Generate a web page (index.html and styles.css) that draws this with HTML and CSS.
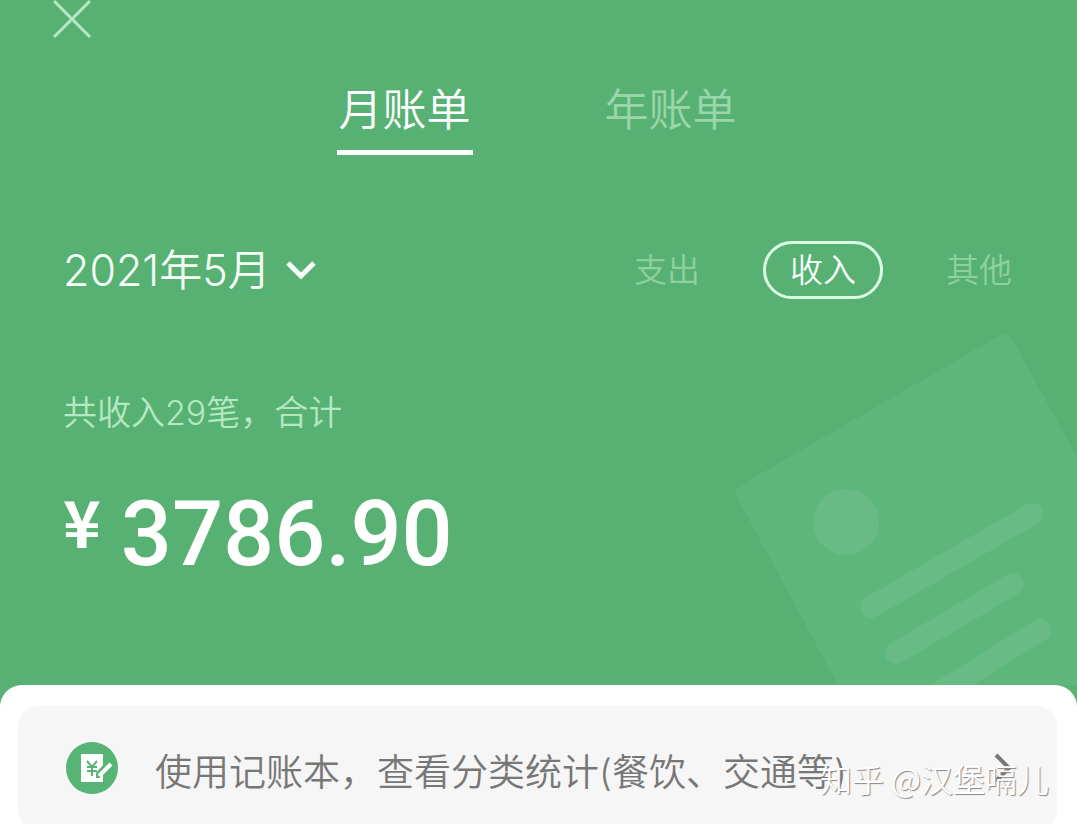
FILE: index.html
```html
<!DOCTYPE html>
<html lang="zh-CN">
    <head>
        <meta charset="UTF-8">
        <meta name="viewport" content="width=device-width, initial-scale=1.0">
        <title>月账单</title>
        <link rel="stylesheet" href="styles.css">
    </head>
    <body>
        <main class="bill">
            <section class="hero">
                <svg class="hero-art" viewBox="0 0 357 365" aria-hidden="true">
                    <path class="art-paper" d="M18 167 L277 17 Q287 11 293 21 L357 137 V365 H118 L16 175 Q13 170 18 167 Z"/>
                    <circle class="art-dot" cx="126" cy="202" r="33"/>
                    <path class="art-line" d="M151 287 L312 194 M176 333 L293 264 M222 371 L320 310"/>
                </svg>

                <button class="close" type="button" aria-label="关闭">
                    <svg viewBox="0 0 38 38" width="38" height="38"><path d="M1 1 L37 37 M37 1 L1 37"/></svg>
                </button>

                <nav class="tabs">
                    <a class="tab active" href="#month">月账单</a>
                    <a class="tab" href="#year">年账单</a>
                </nav>

                <div class="toolbar">
                    <button class="month" type="button">
                        <span>2021年5月</span>
                        <svg viewBox="0 0 32 20" width="32" height="20" aria-hidden="true"><path d="M3 3 L16 16 L29 3"/></svg>
                    </button>
                    <div class="filters">
                        <button class="filter" type="button">支出</button>
                        <button class="filter selected" type="button">收入</button>
                        <button class="filter" type="button">其他</button>
                    </div>
                </div>

                <p class="summary">共收入29笔，合计</p>
                <p class="amount"><span class="currency">¥</span><span>3786.90</span></p>
            </section>

            <section class="sheet">
                <a class="notice" href="#book">
                    <svg class="notice-icon" viewBox="0 0 54 54" width="54" height="54" aria-hidden="true">
                        <circle cx="27" cy="27" r="26" fill="#57b474"/>
                        <path d="M16 13 H38 V24 L31 32 V37 H35 L38 33 V41 H16 Z" fill="#fff"/>
                        <path d="M22 20 L27 26 L32 20 M22 26 H32 M22 30 H32 M27 26 V35" fill="none" stroke="#57b474" stroke-width="2"/>
                        <path d="M34 35 L46 23" stroke="#fff" stroke-width="4"/>
                    </svg>
                    <span class="notice-text">使用记账本，查看分类统计(餐饮、交通等)</span>
                    <svg class="notice-arrow" viewBox="0 0 18 30" width="18" height="30" aria-hidden="true"><path d="M2 2 L15 15 L2 28"/></svg>
                </a>
            </section>

            <div class="watermark">知乎 @汉堡嗝儿</div>
        </main>
    </body>
</html>
```
FILE: styles.css
```css
* {
    box-sizing: border-box;
}
body {
    margin: 0;
    background-color: #fff;
    font-family: Inter, "Noto Sans CJK SC", sans-serif;
    font-weight: 350;
}
button {
    border: 0;
    padding: 0;
    background: none;
    font: inherit;
    color: inherit;
}
a {
    color: inherit;
    text-decoration: none;
}
p {
    margin: 0;
}
svg {
    display: block;
}
.bill {
    position: relative;
    height: 100vh;
    overflow: hidden;
}
.hero {
    position: relative;
    padding: 0 65px 120px 63px;
    background-color: #57b173;
    color: #f6fff8;
}
.hero > * {
    position: relative;
}
.hero .hero-art {
    position: absolute;
    right: 0;
    bottom: 20px;
    width: 357px;
}
.art-paper {
    fill: #5db77a;
}
.art-dot {
    fill: #68bb85;
}
.art-line {
    fill: none;
    stroke: #68bb85;
    stroke-width: 22;
    stroke-linecap: round;
}
.close {
    display: block;
    margin-left: -10px;
}
.close path {
    fill: none;
    stroke: #b9e7c6;
    stroke-width: 3;
}

/* tabs */
.tabs {
    display: flex;
    justify-content: center;
    gap: 130px;
    margin-top: 42px;
}
.tab {
    padding: 0 2px 10px;
    border-bottom: 5px solid transparent;
    font-size: 44px;
    line-height: 60px;
    color: #9ad6aa;
}
.tab.active {
    border-color: #fff;
    color: #fff;
}

/* month picker and filters */
.toolbar {
    display: flex;
    justify-content: space-between;
    align-items: center;
    margin-top: 86px;
}
.month {
    display: flex;
    align-items: center;
    gap: 14px;
    font-size: 43px;
    line-height: 58px;
}
.month path {
    fill: none;
    stroke: currentColor;
    stroke-width: 5;
}
.filters {
    display: flex;
    align-items: center;
    gap: 63px;
}
.filter {
    font-size: 33px;
    line-height: 52px;
    color: #8fd0a1;
}
.filter.selected {
    padding: 0 24px;
    border: 3px solid #dcfbe4;
    border-radius: 29px;
    color: #f6fff8;
}

.summary {
    margin-top: 89px;
    font-size: 34px;
    line-height: 50px;
    color: #b5e8c2;
}
.amount {
    display: flex;
    gap: 20px;
    margin-top: 47px;
    font-family: Roboto, sans-serif;
    font-size: 90px;
    font-weight: 500;
    line-height: 100px;
    color: #fff;
}
.currency {
    font-family: "Noto Sans CJK SC", sans-serif;
    font-size: 64px;
    font-weight: 700;
    line-height: 70px;
}

/* bottom sheet */
.sheet {
    position: relative;
    margin-top: -20px;
    padding: 21px 20px 0 18px;
    border-radius: 22px 22px 0 0;
    background-color: #fff;
}
.notice {
    display: flex;
    align-items: center;
    height: 124px;
    padding: 0 45px 0 47px;
    border-radius: 20px;
    background-color: #f6f6f6;
    font-size: 37px;
    color: #777;
}
.notice-icon {
    flex: none;
    margin-right: 36px;
}
.notice-text {
    flex: 1;
    padding-top: 4px;
    white-space: nowrap;
}
.notice-arrow path {
    fill: none;
    stroke: #777;
    stroke-width: 4;
}
.watermark {
    position: absolute;
    right: 28px;
    bottom: 22px;
    font-family: "Noto Sans CJK SC", sans-serif;
    font-size: 32px;
    line-height: 48px;
    color: #fff;
    text-shadow: 1px 1px 1px #888;
}
```
